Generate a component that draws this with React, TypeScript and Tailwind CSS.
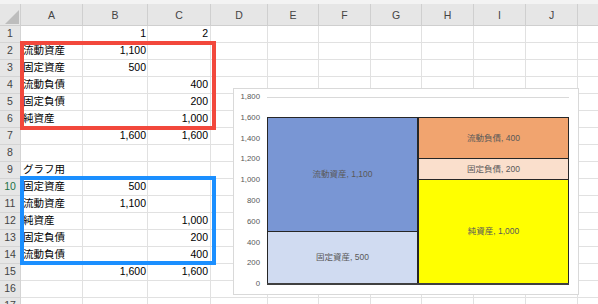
import React from 'react';

const colWidths = 'grid-cols-[21px_62px_65px_63px_57px_51px_52px_51px_52px_52px_52px_40px]';
const letters = ['A', 'B', 'C', 'D', 'E', 'F', 'G', 'H', 'I', 'J', ''];

const rows: [string, string, string][] = [
  ['', '1', '2'],
  ['流動資産', '1,100', ''],
  ['固定資産', '500', ''],
  ['流動負債', '', '400'],
  ['固定負債', '', '200'],
  ['純資産', '', '1,000'],
  ['', '1,600', '1,600'],
  ['', '', ''],
  ['グラフ用', '', ''],
  ['固定資産', '500', ''],
  ['流動資産', '1,100', ''],
  ['純資産', '', '1,000'],
  ['固定負債', '', '200'],
  ['流動負債', '', '400'],
  ['', '1,600', '1,600'],
  ['', '', ''],
  ['', '', ''],
];

const font = { fontFamily: '"Liberation Sans", "Noto Sans CJK JP", sans-serif' };

const ticks = ['1,800', '1,600', '1,400', '1,200', '1,000', '800', '600', '400', '200', '0'];

const PLOT_H = 187;
const MAX = 1800;

const leftBar = [
  { label: '流動資産, 1,100', value: 1100, color: 'bg-[#7996d4]' },
  { label: '固定資産, 500', value: 500, color: 'bg-[#d0dbf1]' },
];
const rightBar = [
  { label: '流動負債, 400', value: 400, color: 'bg-[#f1a46f]' },
  { label: '固定負債, 200', value: 200, color: 'bg-[#fadfcc]' },
  { label: '純資産, 1,000', value: 1000, color: 'bg-[#ffff00]' },
];

function Bar({ parts, className }: { parts: typeof leftBar; className: string }) {
  return (
    <div className={`flex-1 flex flex-col border-[#262626] ${className}`}>
      {parts.map((p, i) => (
        <div
          key={i}
          className={`${p.color} border-t border-[#262626] flex items-center justify-center text-[8.5px] text-[#595959]`}
          style={{ height: (p.value / MAX) * PLOT_H }}
        >
          {p.label}
        </div>
      ))}
    </div>
  );
}

function BalanceChart() {
  return (
    <div className="absolute left-[233px] top-[88px] w-[346px] h-[207px] bg-white border border-[#d9d9d9] flex pt-[8px]">
      {/* Axis labels */}
      <div className="w-[26px] h-[187px] flex flex-col justify-between">
        {ticks.map((t) => (
          <div key={t} className="h-0 flex items-center justify-end text-[7.8px] text-[#595959]">
            {t}
          </div>
        ))}
      </div>
      {/* Plot */}
      <div className="ml-[7px] w-[302px] h-[188px] border-t border-[#d9d9d9] flex items-end">
        <div className="w-full flex items-end border-b-2 border-[#404040]">
          <Bar parts={leftBar} className="border-l border-r" />
          <Bar parts={rightBar} className="border-l border-r" />
        </div>
      </div>
    </div>
  );
}

export default function App() {
  return (
    <div className="relative w-[598px] h-[304px] overflow-hidden bg-white text-black" style={font}>
      <div className="h-[4px] bg-[#f3f3f3]" />
      <div className={`grid ${colWidths}`}>
        {/* Header */}
        <div className="h-[22px] bg-[#e6e6e6] border-r border-b border-[#cfcfcf] relative">
          <svg className="absolute inset-0" width="21" height="22">
            <polygon points="5,20 19,20 19,6" fill="#bdbdbd" />
          </svg>
        </div>
        {letters.map((l, i) => (
          <div
            key={i}
            className="h-[22px] bg-[#e6e6e6] border-r border-b border-[#cfcfcf] flex items-center justify-center pt-[3px] text-[10.5px] text-[#444]"
          >
            {l}
          </div>
        ))}

        {/* Body */}
        {rows.map((r, ri) => (
          <React.Fragment key={ri}>
            <div
              className={`h-[17px] bg-[#e6e6e6] border-r border-b border-[#d4d4d4] flex items-center justify-center text-[10.5px] ${
                ri === 9 ? 'text-[#217346]' : 'text-[#444]'
              }`}
            >
              {ri + 1}
            </div>
            <div className="h-[17px] border-r border-b border-[#e1e1e1] flex items-center pl-[2px] text-[10.5px] whitespace-nowrap">
              {r[0]}
            </div>
            <div className="h-[17px] border-r border-b border-[#e1e1e1] flex items-center justify-end pr-[1px] text-[10.5px]">
              {r[1]}
            </div>
            <div className="h-[17px] border-r border-b border-[#e1e1e1] flex items-center justify-end pr-[2px] text-[10.5px]">
              {r[2]}
            </div>
            {Array.from({ length: 8 }).map((_, ci) => (
              <div key={ci} className="h-[17px] border-r border-b border-[#e1e1e1]" />
            ))}
          </React.Fragment>
        ))}
      </div>

      {/* Highlight boxes */}
      <div className="absolute left-[20px] top-[41px] w-[196px] h-[89px] border-4 border-[#f2483c]" />
      <div className="absolute left-[20px] top-[176px] w-[196px] h-[89px] border-4 border-[#1b8fff]" />

      <BalanceChart />
    </div>
  );
}
